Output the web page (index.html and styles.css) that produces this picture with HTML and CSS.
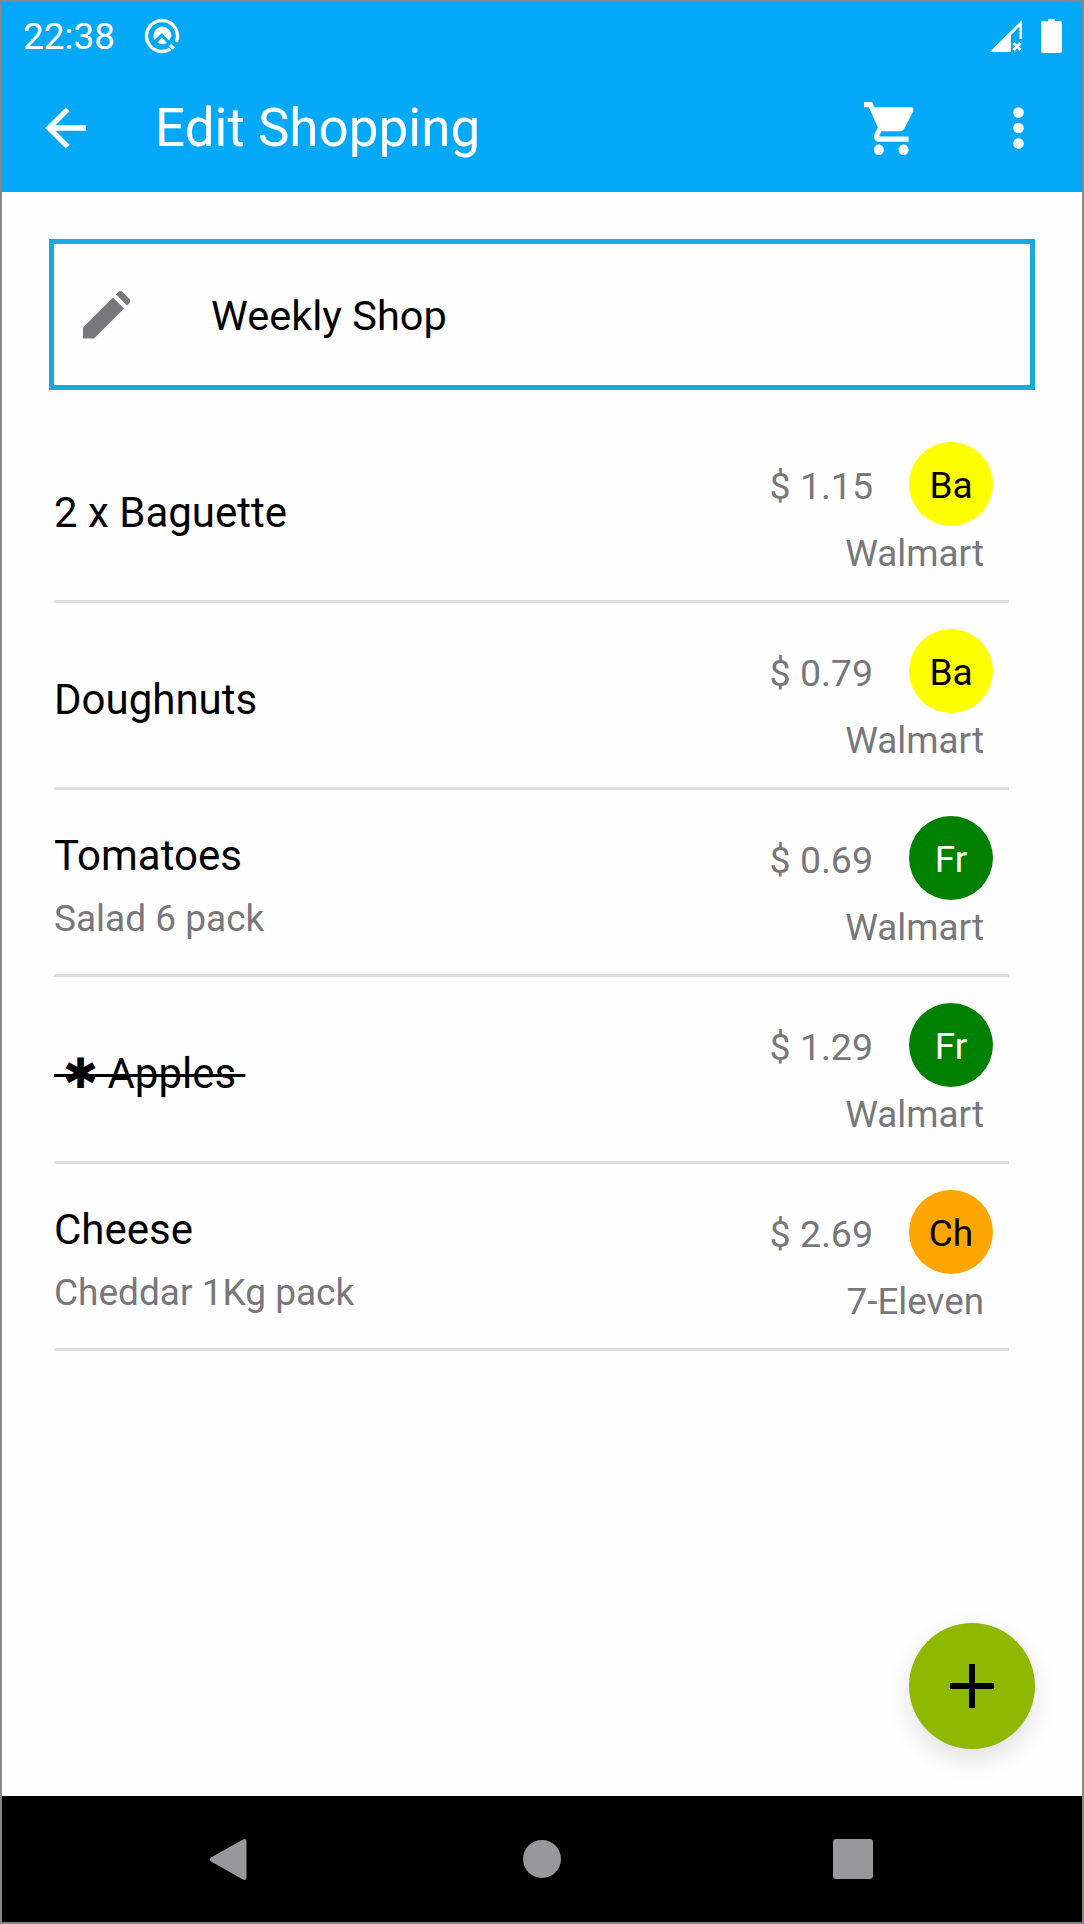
FILE: index.html
```html
<!DOCTYPE html>
<html lang="en">
<head>
<meta charset="utf-8">
<title>Edit Shopping</title>
<link rel="stylesheet" href="styles.css">
</head>
<body>
<div class="frame">
  <header class="appbar">
    <div class="status">
      <span class="clock">22:38</span>
      <svg class="qicon" viewBox="0 0 36 36"><circle cx="18" cy="18" r="15.500" fill="none" stroke="#fff" stroke-width="3.400" stroke-dasharray="87 10.400" transform="rotate(58 18 18)"/><path d="M18 8.500A9.500 9.500 0 0 1 27.500 18L25 22.500 18 15 10.500 22A9.500 9.500 0 0 1 18 8.500Z" fill="#fff"/><path d="M13.500 24.500 18 19.500l5 5.500A9.500 9.500 0 0 1 13.500 24.500Z" fill="#fff"/><path d="M26 27l4 3.500" stroke="#fff" stroke-width="3.400" fill="none"/></svg>
      <span class="status-gap"></span>
      <svg class="signal" viewBox="0 0 34 34"><path d="M1 33 33 1v19h-2.500V7.500L22 16v17Z" fill="#fff"/><path d="M1 33 22 12v21Z" fill="#fff"/><path d="m24.500 24 7 7m0-7-7 7" stroke="#fff" stroke-width="2.800" fill="none"/></svg>
      <svg class="battery" viewBox="0 0 21 34"><path d="M7 0h7v2h5a2 2 0 0 1 2 2v28a2 2 0 0 1-2 2H2a2 2 0 0 1-2-2V4a2 2 0 0 1 2-2h5Z" fill="#fff"/></svg>
    </div>
    <div class="toolbar">
      <svg class="back" viewBox="0 0 42 42"><path d="M41 18.300H10.500L24.500 4.300 20.800.600.300 21l20.500 20.400 3.700-3.700-14-14H41Z" fill="#fff"/></svg>
      <h1 class="title">Edit Shopping</h1>
      <svg class="cart" viewBox="1 2 21 20" preserveAspectRatio="none"><path fill="#fff" d="M7 18c-1.100 0-1.990.9-1.990 2S5.900 22 7 22s2-.9 2-2-.9-2-2-2zM1 2v2h2l3.600 7.590-1.350 2.450c-.16.28-.25.61-.25.96 0 1.100.9 2 2 2h12v-2H7.420c-.14 0-.25-.11-.25-.25l.03-.12.9-1.630h7.450c.75 0 1.410-.41 1.750-1.030l3.580-6.490A1 1 0 0 0 20 4H5.210l-.94-2H1zm16 16c-1.100 0-1.990.9-1.990 2s.89 2 1.990 2 2-.9 2-2-.9-2-2-2z"/></svg>
      <svg class="more" viewBox="0 0 11 42"><circle cx="5.500" cy="5.500" r="5.300" fill="#fff"/><circle cx="5.500" cy="21" r="5.300" fill="#fff"/><circle cx="5.500" cy="36.500" r="5.300" fill="#fff"/></svg>
    </div>
  </header>

  <main class="content">
    <div class="namebox">
      <svg class="pencil" viewBox="0 0 48 48"><path fill="#78777b" d="M0 47.500V36.500L30 6.500 41 17.500 11 47.500Z"/><path fill="#78777b" d="M33 3.500 35.500 1a3 3 0 0 1 4 0l7 7a3 3 0 0 1 0 4L44 14.500Z"/></svg>
      <span class="listname">Weekly Shop</span>
    </div>

    <ul class="items">
      <li class="item">
        <div class="item-main"><span class="name">2 x Baguette</span></div>
        <div class="item-side">
          <div class="price-line"><span class="price">$ 1.15</span><span class="badge badge-ba">Ba</span></div>
          <span class="store">Walmart</span>
        </div>
      </li>
      <li class="item">
        <div class="item-main"><span class="name">Doughnuts</span></div>
        <div class="item-side">
          <div class="price-line"><span class="price">$ 0.79</span><span class="badge badge-ba">Ba</span></div>
          <span class="store">Walmart</span>
        </div>
      </li>
      <li class="item">
        <div class="item-main"><span class="name">Tomatoes</span><span class="note">Salad 6 pack</span></div>
        <div class="item-side">
          <div class="price-line"><span class="price">$ 0.69</span><span class="badge badge-fr">Fr</span></div>
          <span class="store">Walmart</span>
        </div>
      </li>
      <li class="item">
        <div class="item-main"><span class="name struck"> ✱ Apples </span></div>
        <div class="item-side">
          <div class="price-line"><span class="price">$ 1.29</span><span class="badge badge-fr">Fr</span></div>
          <span class="store">Walmart</span>
        </div>
      </li>
      <li class="item">
        <div class="item-main"><span class="name">Cheese</span><span class="note">Cheddar 1Kg pack</span></div>
        <div class="item-side">
          <div class="price-line"><span class="price">$ 2.69</span><span class="badge badge-ch">Ch</span></div>
          <span class="store">7-Eleven</span>
        </div>
      </li>
    </ul>

    <button class="fab" type="button" aria-label="Add">
      <svg class="plus" viewBox="0 0 44 44"><path d="M19 0h6v19h19v6H25v19h-6V25H0v-6h19Z" fill="#000"/></svg>
    </button>
  </main>

  <nav class="navbar">
    <svg class="nav-back" viewBox="0 0 38 43"><path d="M2 19.500 34 1.500q3.500-1.500 3.500 2v36q0 3.500-3.500 2L2 23.500q-2-2 0-4Z" fill="#98979b"/></svg>
    <span class="nav-home"></span>
    <span class="nav-recent"></span>
  </nav>
</div>
</body>
</html>
```

FILE: styles.css
```css
* { box-sizing: border-box; }
html, body { margin: 0; padding: 0; }
body { font-family: Roboto, "Liberation Sans", sans-serif; background: #888; }
.frame {
  width: 1084px;
  height: 1924px;
  border: 2px solid #87868a;
  display: flex;
  flex-direction: column;
  background: #fefefe;
}
.appbar { background: #03a9f6; height: 190px; color: #fff; flex: none; }
.status { height: 68px; display: flex; align-items: center; padding: 0 20px 0 21px; }
.clock { font-size: 37px; line-height: 1; }
.qicon { width: 36px; height: 36px; margin-left: 29px; }
.status-gap { flex: 1; }
.signal { width: 34px; height: 34px; margin-right: 18px; }
.battery { width: 21px; height: 34px; }
.toolbar { height: 122px; display: flex; align-items: center; padding-bottom: 6px; }
.back { width: 42px; height: 42px; margin-left: 43px; }
.title { margin: 0 0 0 68px; font-size: 53px; font-weight: 400; line-height: 1; flex: 1; }
.cart { width: 52px; height: 53px; margin-right: 97px; }
.more { width: 11px; height: 42px; margin-right: 58px; }

.content { flex: 1; position: relative; padding: 47px 0 0 47px; }
.namebox {
  width: 986px;
  height: 151px;
  border: 5px solid #19a8e4;
  display: flex;
  align-items: center;
}
.pencil { width: 48px; height: 48px; margin-left: 29px; }
.listname { margin-left: 80px; font-size: 41.500px; color: #000; padding-top: 2px; }

.items { list-style: none; margin: 26px 0 0 5px; padding: 0; width: 955px; }
.item {
  height: 187px;
  border-bottom: 3px solid #dfdfe1;
  display: flex;
  justify-content: space-between;
}
.item-main { display: flex; flex-direction: column; justify-content: center; padding-top: 9px; }
.name { font-size: 42px; line-height: 63px; color: #000; white-space: pre; }
.note { font-size: 37px; line-height: 63px; color: #78777c; }
.struck { text-decoration: line-through; text-decoration-thickness: 3px; word-spacing: -1.200px; }
.item-side { display: flex; flex-direction: column; align-items: flex-end; padding: 26px 16px 0 0; }
.price-line { display: flex; align-items: center; height: 84px; }
.price { font-size: 37.500px; color: #78777c; margin-right: 36px; padding-top: 4px; }
.badge {
  width: 84px;
  height: 84px;
  border-radius: 50%;
  display: flex;
  align-items: center;
  justify-content: center;
  font-size: 37px;
  padding-top: 2px;
}
.badge-ba { background: #ffff00; color: #000; }
.badge-fr { background: #008000; color: #fff; }
.badge-ch { background: #ffa500; color: #000; }
.store { font-size: 36.800px; line-height: 50px; color: #78777c; padding-right: 9px; margin-top: 3px; }

.fab {
  position: absolute;
  left: 907px;
  top: 1431px;
  width: 126px;
  height: 126px;
  border: 0;
  padding: 0;
  border-radius: 50%;
  background: #8fb803;
  box-shadow: 0 10px 24px rgba(0, 0, 0, 0.12);
  display: flex;
  align-items: center;
  justify-content: center;
}
.plus { width: 44px; height: 44px; }

.navbar { height: 126px; background: #000; flex: none; position: relative; display: flex; align-items: center; }
.nav-back { width: 38px; height: 43px; margin-left: 207px; }
.nav-home { width: 38px; height: 38px; border-radius: 50%; background: #98979b; margin-left: 276px; }
.nav-recent { width: 40px; height: 40px; border-radius: 3px; background: #98979b; margin-left: 272px; }
```
